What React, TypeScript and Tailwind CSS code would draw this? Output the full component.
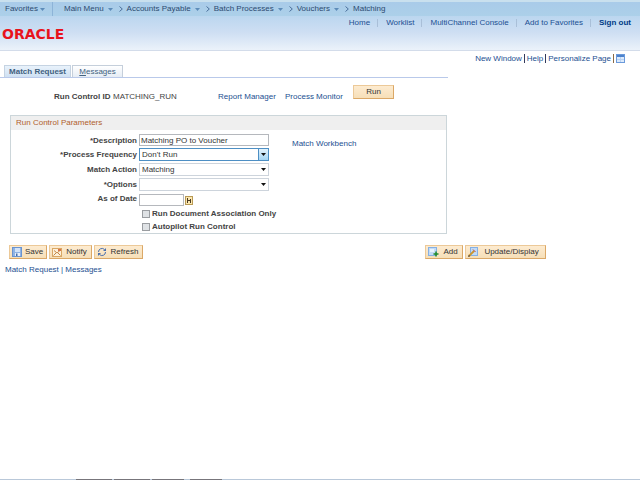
import { useState, type ReactNode } from 'react';
import { clsx } from 'clsx';

const CRUMBS = ['Main Menu', 'Accounts Payable', 'Batch Processes', 'Vouchers', 'Matching'];
const HEADER_LINKS = ['Home', 'Worklist', 'MultiChannel Console', 'Add to Favorites'];

function Caret() {
  return (
    <svg viewBox="0 0 5 3" className="h-[3px] w-[5px] shrink-0" aria-hidden="true">
      <path d="M0 0h5L2.5 3z" fill="#5d8cb9" />
    </svg>
  );
}

function Chevron() {
  return (
    <svg viewBox="0 0 4 6" className="h-[6px] w-1 shrink-0" aria-hidden="true">
      <path d="M.5.5 3.3 3 .5 5.5" fill="none" stroke="#4a6f9b" />
    </svg>
  );
}

function SaveIcon() {
  return (
    <svg viewBox="0 0 10 10" className="size-[10px] shrink-0" aria-hidden="true">
      <rect x=".5" y=".5" width="9" height="9" fill="#8fb3e4" stroke="#6a93cf" />
      <path d="M3 1h5v4H3z" fill="#d3e3f8" />
      <path d="M3 6h5v3H3z" fill="#e6effb" />
      <path d="M4 6.500h1.500V9H4z" fill="#456da8" />
    </svg>
  );
}

function NotifyIcon() {
  return (
    <svg viewBox="0 0 10 9" className="h-[9px] w-[10px] shrink-0" aria-hidden="true">
      <rect x=".5" y=".5" width="9" height="8" fill="#fdf1da" stroke="#d9a765" />
      <path d="m2 2.500 3 2.500 3-2.500M1.500 7.500 4 5M8.500 7.500 6 5" fill="none" stroke="#c48746" />
      <path d="M6 1h3v2H6z" fill="#d9744a" />
    </svg>
  );
}

function RefreshIcon() {
  return (
    <svg viewBox="0 0 10 10" className="size-[10px] shrink-0" aria-hidden="true">
      <path
        d="M1.500 5A3.500 3.500 0 0 1 7.500 2.500M8.500 5A3.500 3.500 0 0 1 2.500 7.500"
        fill="none"
        stroke="#4a6fae"
      />
      <path d="M9 1v3H6zM1 9V6h3z" fill="#4a6fae" />
    </svg>
  );
}

function AddIcon() {
  return (
    <svg viewBox="0 0 11 10" className="h-[10px] w-[11px] shrink-0" aria-hidden="true">
      <rect x=".5" y=".5" width="8" height="8" fill="#c3dbf6" stroke="#85b0e4" />
      <path d="M2 2h4v3H2z" fill="#e8f3fe" />
      <path d="M8 4.500v5M5.500 7h5" stroke="#1f8a2c" strokeWidth="1.500" />
    </svg>
  );
}

function UpdateIcon() {
  return (
    <svg viewBox="0 0 10 10" className="size-[10px] shrink-0" aria-hidden="true">
      <rect x="2.500" y=".5" width="7" height="8" fill="#c3dbf6" stroke="#85b0e4" />
      <path d="M1 9 6 4" stroke="#c9962f" strokeWidth="1.800" />
      <path d="M5 2.500 7.500 5" stroke="#c04a3a" />
      <path d="M0 10 .8 7.800l1.400 1.400z" fill="#4c3a2a" />
    </svg>
  );
}

function GridIcon() {
  return (
    <svg viewBox="0 0 9 9" className="size-[9px]" aria-hidden="true">
      <rect x=".5" y=".5" width="8" height="8" fill="#dceafb" stroke="#6b9adb" />
      <path d="M1 1h7v2H1z" fill="#4d82cc" />
      <path d="M1 5.500h7M4.500 3v5" stroke="#b9d2f2" />
    </svg>
  );
}

function CalendarIcon() {
  return (
    <svg viewBox="0 0 8 9" className="h-[9px] w-2" aria-hidden="true">
      <rect x=".5" y=".5" width="7" height="8" fill="#fbe7b0" stroke="#b99a55" />
      <path d="M2.500 2v5M5.500 3v4M3 4.500h2" fill="none" stroke="#4a3a22" />
    </svg>
  );
}

function Link({ children, className }: { children: ReactNode; className?: string }) {
  return (
    <a href="#" className={clsx('whitespace-nowrap', className ?? 'text-[#1c4f91]')}>
      {children}
    </a>
  );
}

interface ActionButtonProps {
  icon?: ReactNode;
  label: string;
  className?: string;
}

function ActionButton({ icon, label, className }: ActionButtonProps) {
  return (
    <button
      type="button"
      className={clsx(
        'flex h-[14px] items-center border border-[#ecc998] border-r-[#dba867] border-b-[#dba867] bg-linear-to-b from-[#fdebd0] to-[#f6dfb8] text-[#333]',
        className
      )}
    >
      {icon}
      <span className="flex-1 text-center">{label}</span>
    </button>
  );
}

function Label({ htmlFor, children }: { htmlFor: string; children: ReactNode }) {
  return (
    <label htmlFor={htmlFor} className="text-right font-bold whitespace-nowrap text-[#444]">
      {children}
    </label>
  );
}

interface SelectFieldProps {
  id: string;
  options: string[];
  focused?: boolean;
}

function SelectField({ id, options, focused }: SelectFieldProps) {
  return (
    <div className={clsx('relative h-[13px] w-[130px] border', focused ? 'border-[#4d8fc4]' : 'border-[#cdd4dc]')}>
      <select id={id} className="block h-full w-full appearance-none bg-white pl-[2px] text-[#333] outline-none">
        {options.map((option) => (
          <option key={option}>{option}</option>
        ))}
      </select>
      <span
        className={clsx(
          'pointer-events-none absolute inset-y-0 right-0 flex w-[10px] items-center justify-center',
          focused && 'border-l border-[#4d8fc4] bg-linear-to-b from-[#e3f3fd] to-[#a5d6f4]'
        )}
      >
        <svg viewBox="0 0 5 3" className="h-[3px] w-[5px]" aria-hidden="true">
          <path d="M0 0h5L2.500 3z" fill="#111" />
        </svg>
      </span>
    </div>
  );
}

function CheckField({ id, label }: { id: string; label: string }) {
  const [checked, setChecked] = useState(false);
  return (
    <div className="flex h-[13px] items-center gap-[2px] pl-[3px]">
      <input
        id={id}
        type="checkbox"
        checked={checked}
        onChange={(e) => setChecked(e.target.checked)}
        className="size-2 shrink-0 appearance-none border border-[#9a9da1] bg-[#dfe2e5] checked:bg-[#4d8fc4]"
      />
      <label htmlFor={id} className="font-bold whitespace-nowrap text-[#444]">
        {label}
      </label>
    </div>
  );
}

function Header() {
  return (
    <header>
      <nav
        aria-label="Breadcrumb"
        className="flex h-4 items-center border-t-2 border-[#c9e0ee] bg-linear-to-b from-[#a9cbe9] to-[#acd0e9] text-[#2c4a70]"
      >
        <div className="flex h-full w-[53px] items-center gap-[2px] border-r border-[#8db4d8] pl-[5px]">
          <a href="#">Favorites</a>
          <Caret />
        </div>
        <ol className="flex items-center gap-[6px] pl-[11px]">
          {CRUMBS.map((crumb, i) => (
            <li key={crumb} className="flex items-center gap-1 whitespace-nowrap">
              {i > 0 && <Chevron />}
              <a href="#">{crumb}</a>
              {i < CRUMBS.length - 1 && <Caret />}
            </li>
          ))}
        </ol>
      </nav>
      <div className="flex h-[35px] justify-between border-b border-[#d3dcea] bg-linear-to-b from-[#bbd6ef] via-[#cfdff3] to-[#ebf2fa]">
        <div className="pt-[9px] pl-[2px] font-['DejaVu_Sans',sans-serif] text-[14px] leading-[18px] font-bold text-[#e8131c]">
          ORACLE
        </div>
        <nav aria-label="Account" className="flex h-[14px] items-center pr-[9px]">
          {HEADER_LINKS.map((item) => (
            <span key={item} className="mr-2 flex items-center border-r border-[#a9bfd8] pr-[7px] leading-2">
              <Link>{item}</Link>
            </span>
          ))}
          <Link className="font-bold text-[#003a85]">Sign out</Link>
        </nav>
      </div>
    </header>
  );
}

export default function App() {
  return (
    <div className="flex min-h-screen flex-col bg-white font-['Liberation_Sans',Arial,sans-serif] text-[8px] leading-[10px]">
      <Header />

      <div className="flex h-[14px] items-center justify-end gap-[2px] pt-px pr-[15px]">
        <Link>New Window</Link>
        <span className="h-[9px] w-px bg-[#333a5c]" />
        <Link>Help</Link>
        <span className="h-[9px] w-px bg-[#333a5c]" />
        <Link>Personalize Page</Link>
        <span className="h-[9px] w-px bg-[#8a6a45]" />
        <a href="#" aria-label="Personalize grid">
          <GridIcon />
        </a>
      </div>

      <nav aria-label="Pages" className="flex h-[13px] w-[70%] gap-px border-b border-[#b9c9ea] pl-1">
        <a
          href="#"
          aria-current="page"
          className="flex w-[67px] items-center justify-center border border-b-0 border-[#c5d3e2] bg-linear-to-b from-[#e9f2fb] to-[#cfe1f3] font-bold whitespace-nowrap text-[#41617f]"
        >
          Match Request
        </a>
        <a
          href="#"
          className="flex w-[51px] items-center justify-center border border-b-0 border-[#c5cfdb] bg-linear-to-b from-white to-[#e6edf5] text-[#41617f]"
        >
          <span className="underline">M</span>essages
        </a>
      </nav>

      <main>
        <div className="flex h-[37px] items-center pl-[54px]">
          <span className="w-[59px] font-bold whitespace-nowrap text-[#444]">Run Control ID</span>
          <span className="w-[105px] text-[#444]">MATCHING_RUN</span>
          <span className="w-[67px]">
            <Link>Report Manager</Link>
          </span>
          <span className="w-[68px]">
            <Link>Process Monitor</Link>
          </span>
          <ActionButton label="Run" className="mb-[9px] w-[41px]" />
        </div>

        <section className="ml-[10px] w-[437px] border border-[#ccd6da]">
          <h2 className="h-[14px] bg-[#efefef] pl-[5px] text-[8px] leading-[14px] text-[#b0602c]">
            Run Control Parameters
          </h2>
          <div className="flex gap-[22px] pt-1">
            <form className="grid grid-cols-[126px_131px] items-center gap-x-[2px]" onSubmit={(e) => e.preventDefault()}>
              <Label htmlFor="description">*Description</Label>
              <input
                id="description"
                type="text"
                defaultValue="Matching PO to Voucher"
                className="mb-[2px] h-3 w-[130px] border border-[#b5b8bd] px-px text-[#333]"
              />
              <Label htmlFor="frequency">*Process Frequency</Label>
              <SelectField id="frequency" options={["Don't Run", 'Once', 'Always']} focused />
              <Label htmlFor="action">Match Action</Label>
              <div className="py-[2px]">
                <SelectField id="action" options={['Matching', 'Unmatch']} />
              </div>
              <Label htmlFor="options">*Options</Label>
              <SelectField id="options" options={['', 'Process All Units', 'Process Business Unit']} />
              <Label htmlFor="as-of">As of Date</Label>
              <div className="flex items-center pt-[3px] pb-px">
                <input id="as-of" type="text" className="mr-px h-3 w-[45px] border border-[#b5b8bd] px-px" />
                <button type="button" aria-label="Choose a date">
                  <CalendarIcon />
                </button>
              </div>
              <div className="col-start-2">
                <CheckField id="document-only" label="Run Document Association Only" />
                <CheckField id="autopilot" label="Autopilot Run Control" />
              </div>
            </form>
            <div className="pt-[5px]">
              <Link>Match Workbench</Link>
            </div>
          </div>
        </section>

        <div className="mt-[11px] flex w-[546px] justify-between pl-[9px]">
          <div className="flex gap-[2px]">
            <ActionButton icon={<SaveIcon />} label="Save" className="w-[38px] pl-[2px]" />
            <ActionButton icon={<NotifyIcon />} label="Notify" className="w-[43px] pl-[2px]" />
            <ActionButton icon={<RefreshIcon />} label="Refresh" className="w-[49px] pl-[2px]" />
          </div>
          <div className="flex gap-[2px]">
            <ActionButton icon={<AddIcon />} label="Add" className="w-[38px] pl-[2px]" />
            <ActionButton icon={<UpdateIcon />} label="Update/Display" className="w-[81px] pl-[2px]" />
          </div>
        </div>

        <div className="mt-[6px] pl-[5px] text-[#1c4f91]">
          <Link>Match Request</Link> | <Link>Messages</Link>
        </div>
      </main>

      <div className="mt-auto flex h-px gap-[2px] bg-[#b9c8d9] pl-[76px]">
        <span className="w-9 bg-[#77757b]" />
        <span className="w-9 bg-[#77757b]" />
        <span className="w-8 bg-[#77757b]" />
        <span className="ml-1 w-8 bg-[#77757b]" />
      </div>
    </div>
  );
}
